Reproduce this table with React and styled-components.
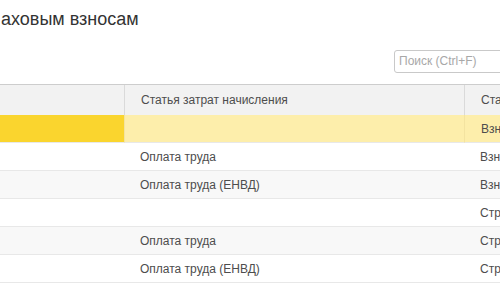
import React from "react";
import styled, { createGlobalStyle } from "styled-components";

const Global = createGlobalStyle`
  html, body { margin: 0; padding: 0; background: #fff; overflow: hidden; }
  body { font-family: "Liberation Sans", Arial, sans-serif; }
`;

const Page = styled.div`
  width: 560px;
  height: 300px;
  display: flex;
  flex-direction: column;
  color: #4d4d4d;
`;

const TitleBar = styled.div`
  height: 38px;
  padding: 9px 0 0 1px;
  box-sizing: border-box;
  font-size: 18px;
  line-height: 20px;
  color: #333;
`;

const Toolbar = styled.div`
  display: flex;
  padding: 12px 0 0 394px;
  height: 46px;
  box-sizing: border-box;
`;

const Search = styled.div`
  flex: 1;
  height: 23px;
  box-sizing: border-box;
  border: 1px solid #c9c9c9;
  border-radius: 3px;
  font-size: 12px;
  line-height: 21px;
  padding-left: 4px;
  color: #a8a8a8;
`;

const Table = styled.div`
  display: grid;
  grid-template-columns: 124px 340px 1fr;
  border-top: 1px solid #cdcdcd;
`;

const HeadCell = styled.div`
  height: 30px;
  box-sizing: border-box;
  background: #f2f2f2;
  border-left: ${(p) => (p.$first ? "none" : "1px solid #dadada")};
  padding-left: 16px;
  font-size: 12px;
  line-height: 30px;
  white-space: nowrap;
  overflow: hidden;
`;

const Cell = styled.div`
  height: 28px;
  box-sizing: border-box;
  border-bottom: 1px solid #e8e8e8;
  border-left: ${(p) => (p.$selected && !p.$first ? "1px solid #f3e3a0" : "none")};
  background: ${(p) =>
    p.$selected ? (p.$first ? "#fad52e" : "#fdeeab") : p.$alt ? "#f8f8f8" : "#fff"};
  padding-left: 16px;
  font-size: 12px;
  line-height: 28px;
  white-space: nowrap;
  overflow: hidden;
`;

const rows = [
  { a: "", b: "", c: "Взносы в ПФР" },
  { a: "", b: "Оплата труда", c: "Взносы в ПФР" },
  { a: "", b: "Оплата труда (ЕНВД)", c: "Взносы в ПФР" },
  { a: "", b: "", c: "Страховые взносы" },
  { a: "", b: "Оплата труда", c: "Страховые взносы" },
  { a: "", b: "Оплата труда (ЕНВД)", c: "Страховые взносы" },
];

export default function App() {
  return (
    <>
      <Global />
      <Page>
        <TitleBar>аховым взносам</TitleBar>
        <Toolbar>
          <Search>Поиск (Ctrl+F)</Search>
        </Toolbar>
        <Table>
          <HeadCell $first></HeadCell>
          <HeadCell>Статья затрат начисления</HeadCell>
          <HeadCell>Статья</HeadCell>
          {rows.map((r, i) => (
            <React.Fragment key={i}>
              <Cell $first $selected={i === 0} $alt={i % 2 === 0}>{r.a}</Cell>
              <Cell $selected={i === 0} $alt={i % 2 === 0}>{r.b}</Cell>
              <Cell $selected={i === 0} $alt={i % 2 === 0}>{r.c}</Cell>
            </React.Fragment>
          ))}
        </Table>
      </Page>
    </>
  );
}
